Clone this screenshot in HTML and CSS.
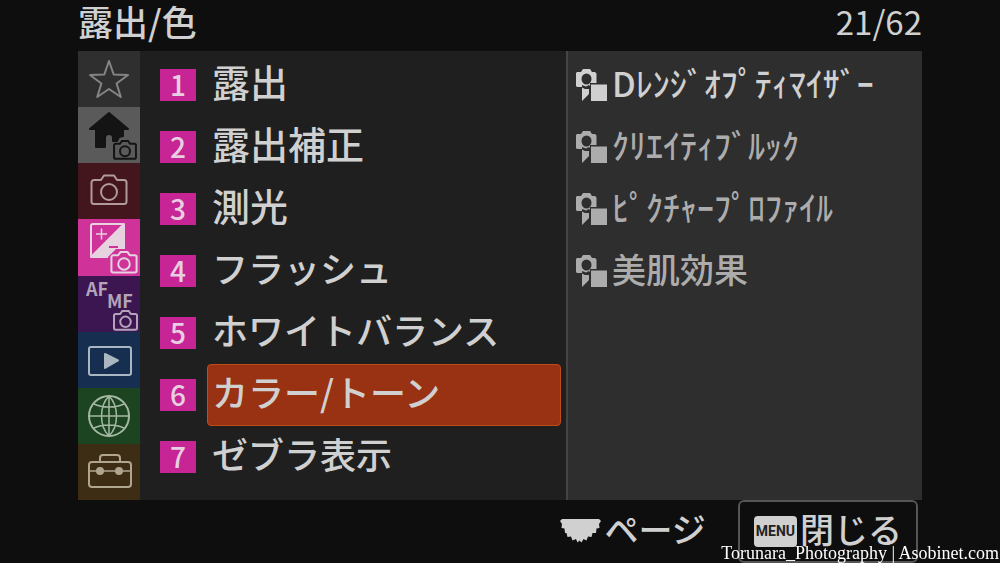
FILE: index.html
```html
<!DOCTYPE html>
<html lang="ja">
<head>
    <meta charset="UTF-8">
    <meta name="viewport" content="width=device-width, initial-scale=1.0">
    <title>露出/色</title>
    <link rel="stylesheet" href="styles.css">
</head>
<body>
    <!-- shared icons -->
    <svg class="defs" aria-hidden="true">
        <symbol id="camera" viewBox="0 0 38 32">
            <path d="M4 6h7l3-4.500h10l3 4.500h7a2.500 2.500 0 0 1 2.500 2.500v19a2.500 2.500 0 0 1-2.500 2.500H4a2.500 2.500 0 0 1-2.500-2.500v-19A2.500 2.500 0 0 1 4 6z" vector-effect="non-scaling-stroke"/>
            <circle cx="19" cy="18" r="8" vector-effect="non-scaling-stroke"/>
        </symbol>
        <symbol id="still-movie" viewBox="0 0 31 32">
            <path fill-rule="evenodd" d="M1 3h4l2-3h7l2 3h3l1.500 1.500V14H14v3l-1-1-3 1.500L6 16v2H1l-1-1V4zM10.500 4.500a5 5.500 0 1 0 0 11a5 5.500 0 0 0 0-11z"/>
            <path d="M6 18.500l3 1.500h4v5l-7 7zM15 15.500h16V32H15z"/>
        </symbol>
    </svg>

    <div class="screen">
        <header class="header">
            <h1>露出/色</h1>
            <span class="page-count">21/62</span>
        </header>

        <main class="panel">
            <nav class="tabs">
                <button class="tab star" aria-label="マイメニュー">
                    <svg viewBox="0 0 62 56"><path d="M31 10l4.700 13.500L50 24l-11.400 8.500L42.800 46 31 38l-11.800 8 4.200-13.500L12 24l14.300-.500z"/></svg>
                </button>
                <button class="tab home" aria-label="メイン">
                    <svg viewBox="0 0 62 56">
                        <path class="solid" d="M31 6l19 16h-5v7l-4 1-2 4h-4v-3a4 4 0 0 0-8 0v9h-9V22h-6z"/>
                        <use href="#camera" x="35" y="33" width="24" height="20"/>
                    </svg>
                </button>
                <button class="tab shooting" aria-label="撮影">
                    <svg viewBox="0 0 62 56"><use href="#camera" x="12" y="11" width="38" height="32"/></svg>
                </button>
                <button class="tab exposure" aria-label="露出/色">
                    <svg viewBox="0 0 62 56">
                        <rect x="13" y="5" width="33" height="33" rx="2"/>
                        <path class="solid" d="M46 5v27l-5 1-3 3h-5l-3 2H13z"/>
                        <path class="thin" d="M18 15h11M23.500 9.500v11"/>
                        <path class="minus" d="M31 28h9"/>
                        <path class="backing" d="M30 38l8-8h13l8 8v17H30z"/>
                        <use href="#camera" x="32" y="32" width="28" height="23"/>
                    </svg>
                </button>
                <button class="tab focus" aria-label="フォーカス">
                    <svg viewBox="0 0 62 56">
                        <text x="8" y="20">AF</text>
                        <text x="29" y="32">MF</text>
                        <use href="#camera" x="35" y="34" width="25" height="21"/>
                    </svg>
                </button>
                <button class="tab playback" aria-label="再生">
                    <svg viewBox="0 0 62 56">
                        <rect x="11" y="15" width="42" height="28" rx="2"/>
                        <path class="solid" d="M27 22l13 6.500L27 36z"/>
                    </svg>
                </button>
                <button class="tab network" aria-label="ネットワーク">
                    <svg viewBox="0 0 62 56">
                        <circle cx="31" cy="28" r="20"/>
                        <path class="thin" d="M11 28h40M31 8v40M31 8c-10 10-10 30 0 40M31 8c10 10 10 30 0 40M16 16c8 4 22 4 30 0M16 40c8-4 22-4 30 0"/>
                    </svg>
                </button>
                <button class="tab setup" aria-label="セットアップ">
                    <svg viewBox="0 0 62 56">
                        <rect x="11" y="18" width="42" height="25" rx="3"/>
                        <path d="M22 18v-4q0-3 3-3h14q3 0 3 3v4"/>
                        <path class="thin" d="M11 27h42"/>
                        <circle class="solid" cx="22" cy="27" r="3"/>
                        <circle class="solid" cx="41" cy="27" r="3"/>
                    </svg>
                </button>
            </nav>

            <div class="groups">
                <button class="group"><span class="num">1</span><span class="label">露出</span></button>
                <button class="group"><span class="num">2</span><span class="label">露出補正</span></button>
                <button class="group"><span class="num">3</span><span class="label">測光</span></button>
                <button class="group"><span class="num">4</span><span class="label kana">フラッシュ</span></button>
                <button class="group"><span class="num">5</span><span class="label kana">ホワイトバランス</span></button>
                <button class="group selected"><span class="num">6</span><span class="label kana">カラー/トーン</span></button>
                <button class="group"><span class="num">7</span><span class="label kana">ゼブラ表示</span></button>
            </div>

            <div class="items">
                <button class="item current"><svg><use href="#still-movie"/></svg><span>Dﾚﾝｼﾞｵﾌﾟﾃｨﾏｲｻﾞｰ</span></button>
                <button class="item"><svg><use href="#still-movie"/></svg><span>ｸﾘｴｲﾃｨﾌﾞﾙｯｸ</span></button>
                <button class="item"><svg><use href="#still-movie"/></svg><span>ﾋﾟｸﾁｬｰﾌﾟﾛﾌｧｲﾙ</span></button>
                <button class="item"><svg><use href="#still-movie"/></svg><span>美肌効果</span></button>
            </div>
        </main>

        <footer class="footer">
            <button class="page-button">
                <svg class="dial" viewBox="0 0 42 26"><path d="M2 0h37l2 2-2 3 .500 4-3 .500-.500 4.500h-3.500l-1 4-3.500-.500-1.500 4-3-1.500-2 3.500-2-2-2 2-1.500-3.500-3.500 1.500-1.500-4-3.500.500-1-4H5l-.500-4.500-3-.500L2 5 0 2z"/></svg>
                <span>ページ</span>
            </button>
            <button class="close-button"><span class="menu-key">MENU</span><span>閉じる</span></button>
        </footer>
    </div>

    <div class="credit">Torunara_Photography | Asobinet.com</div>
</body>
</html>
```
FILE: styles.css
```css
* {
    box-sizing: border-box;
}
body {
    margin: 0;
    background-color: #0e0e0e;
    color: #d0d0d0;
    font-family: "Noto Sans CJK JP", sans-serif;
    font-weight: 500;
}
button {
    margin: 0;
    padding: 0;
    border: none;
    background: none;
    color: inherit;
    font: inherit;
    text-align: left;
    white-space: nowrap;
    cursor: pointer;
}
.defs {
    position: absolute;
    width: 0;
    height: 0;
}
.screen {
    display: flex;
    flex-direction: column;
    min-height: 100vh;
    padding: 0 78px;
}

/* header */
.header {
    display: flex;
    justify-content: space-between;
    align-items: center;
    height: 51px;
    padding-bottom: 10px;
    line-height: 40px;
}
.header h1 {
    margin: 0;
    font-size: 35px;
    font-weight: 500;
}
.page-count {
    font-size: 33px;
    font-weight: 400;
}

/* main panel */
.panel {
    display: flex;
    flex: 1;
    background-color: #1f1f1f;
}
.tabs {
    display: flex;
    flex-direction: column;
    width: 62px;
}
.tab {
    flex: 1;
    color: #b8b8b8;
}
.tab svg {
    display: block;
    width: 62px;
    height: 56px;
    fill: none;
    stroke: currentColor;
    stroke-width: 2;
    stroke-linejoin: round;
}
.tab .solid {
    fill: currentColor;
}
.tab .thin {
    stroke-width: 1.5;
}
.tab text {
    fill: currentColor;
    stroke: none;
    font-size: 18px;
    font-weight: 700;
}
.star {
    background-color: #2f2f2f;
    color: #858585;
}
.home {
    background-color: #5a5a5a;
    color: #141414;
}
.shooting {
    background-color: #42161c;
    color: #b09a9c;
}
.exposure {
    background-color: #cf3399;
    color: #e6d3df;
}
.exposure .minus {
    stroke: #cf3399;
}
.exposure .backing {
    fill: #cf3399;
    stroke: none;
}
.focus {
    background-color: #3c1650;
    color: #b3a4ba;
}
.playback {
    background-color: #162f50;
    color: #aab6c0;
}
.network {
    background-color: #1c4420;
    color: #a5b8a4;
}
.setup {
    background-color: #3e2d15;
    color: #b0a68f;
}

/* group list */
.groups {
    flex: 1;
    padding: 3px 5px 0 20px;
}
.group {
    display: flex;
    align-items: center;
    gap: 11px;
    width: 100%;
    height: 62px;
    font-size: 38px;
}
.num {
    width: 36px;
    height: 32px;
    background-color: #c72496;
    color: #e8cfe0;
    font-size: 28px;
    line-height: 31px;
    text-align: center;
}
.label {
    flex: 1;
    height: 62px;
    padding-left: 4px;
    border: 1px solid transparent;
    border-radius: 4px;
    line-height: 52px;
}
.kana {
    font-size: 36px;
}
.selected .label {
    border-color: #c04d18;
    background-color: #983212;
}

/* item list */
.items {
    flex: 0 0 356px;
    padding: 3px 0 0 8px;
    border-left: 2px solid #444;
    background-color: #2e2e2e;
}
.item {
    display: flex;
    align-items: center;
    gap: 5px;
    width: 100%;
    height: 62px;
    color: #acacac;
    font-size: 34px;
}
.item svg {
    width: 31px;
    height: 32px;
    fill: currentColor;
}
.item span {
    padding-bottom: 6px;
}
.current {
    color: #d0d0d0;
}

/* footer */
.footer {
    display: flex;
    justify-content: flex-end;
    gap: 32px;
    height: 63px;
    padding-right: 4px;
    font-size: 34px;
}
.page-button {
    display: flex;
    align-items: center;
    gap: 2px;
}
.page-button span {
    padding-bottom: 6px;
}
.dial {
    width: 42px;
    height: 26px;
    fill: currentColor;
}
.close-button {
    display: flex;
    align-items: center;
    gap: 3px;
    padding: 0 14px;
    border: 2px solid #565656;
    border-radius: 6px;
}
.close-button span:last-child {
    padding-bottom: 6px;
}
.menu-key {
    padding: 0 2px;
    border-radius: 4px;
    background-color: #d0d0d0;
    color: #222;
    font-family: Roboto, sans-serif;
    font-size: 14px;
    font-weight: 700;
    line-height: 31px;
}

.credit {
    position: fixed;
    right: 1px;
    bottom: 0;
    color: #fff;
    font-family: "Liberation Serif", serif;
    font-size: 18px;
    font-weight: 400;
    line-height: 20px;
}
```
